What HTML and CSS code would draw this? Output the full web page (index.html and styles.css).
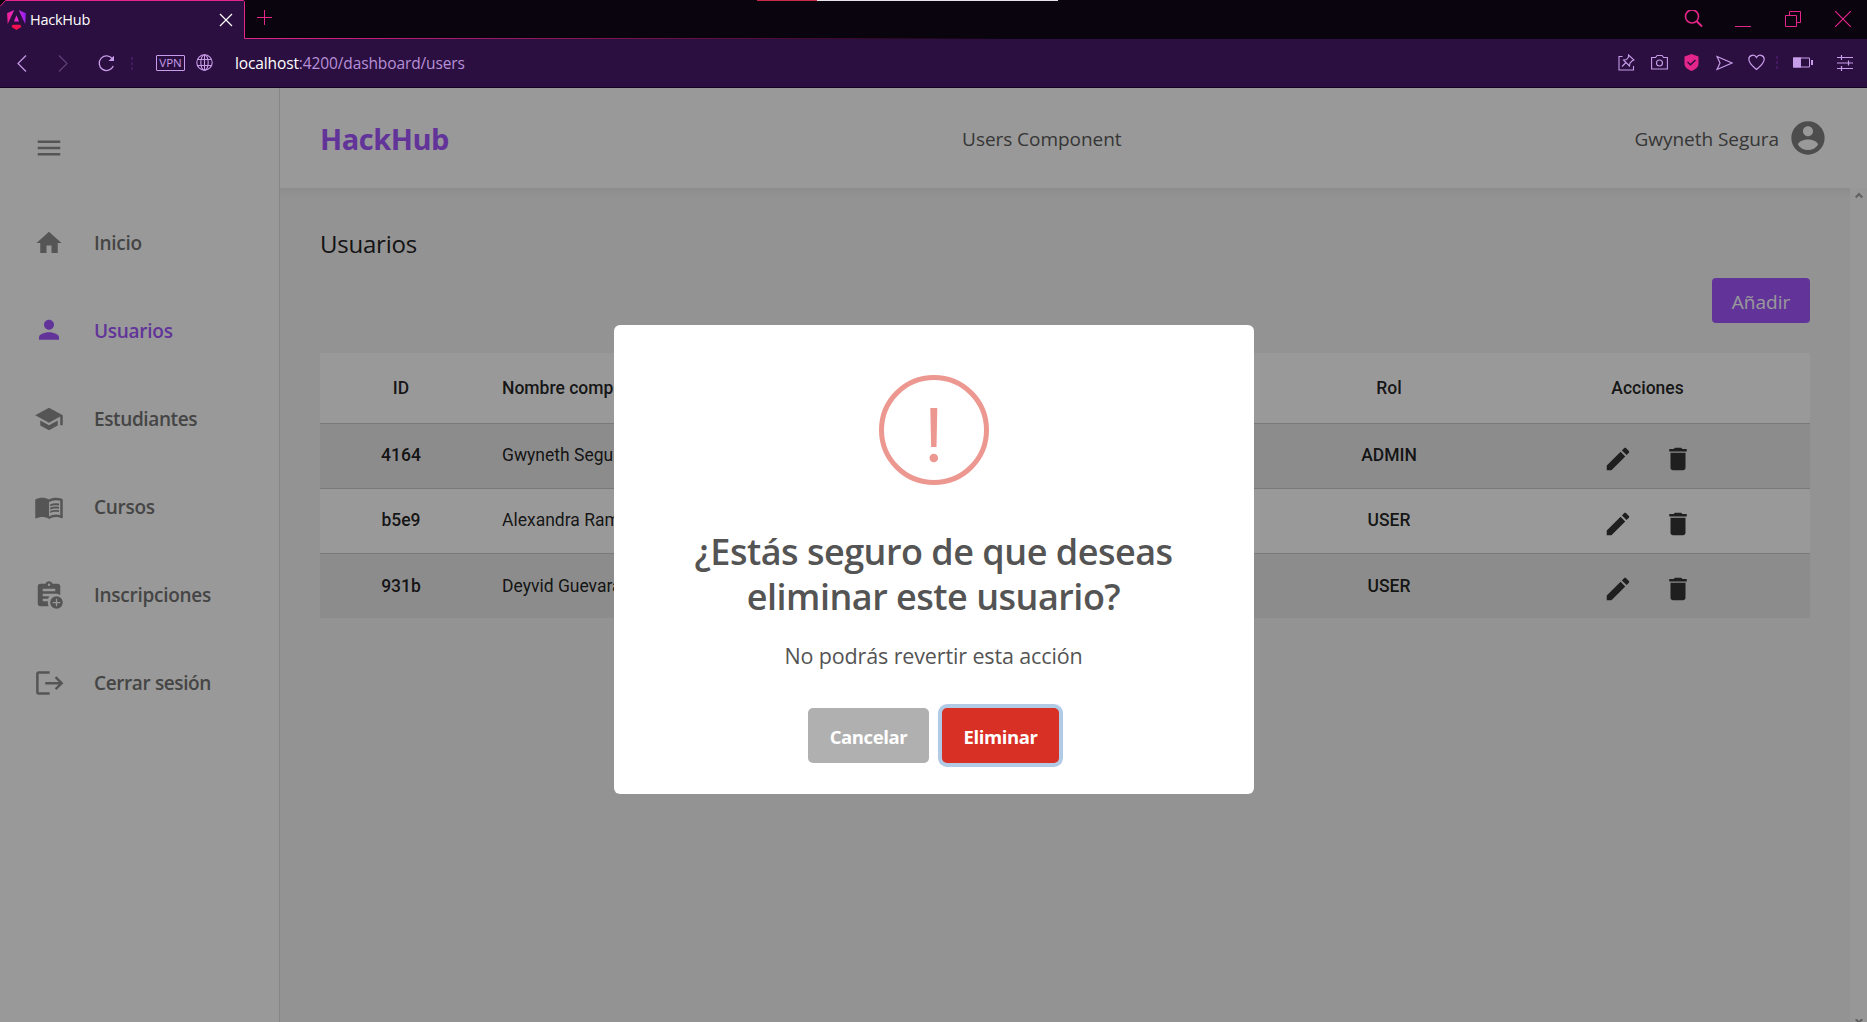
FILE: index.html
```html
<!DOCTYPE html>
<html lang="es">
<head>
<meta charset="utf-8">
<title>HackHub</title>
<link rel="stylesheet" href="styles.css">
</head>
<body>
<header class="browser">
  <div class="tabstrip">
    <div class="tab">
      <svg class="tab-edge" width="245" height="39" viewBox="0 0 245 39"><path d="M0 39V6.500L5.500.5H243.500L244.500 1.500V39z" fill="#2b0f40"/><path d="M0 6.500L5.500.5H243.500L244.500 1.500V38.500" fill="none" stroke="#e4258a"/></svg>
      <svg class="favicon" width="19" height="20" viewBox="0 0 223 236"><defs><linearGradient id="ng" x1="0" y1="0.2" x2="1" y2="0"><stop offset="0" stop-color="#f0219a"/><stop offset=".5" stop-color="#e92ad8"/><stop offset="1" stop-color="#7a1cf5"/></linearGradient></defs><path fill="url(#ng)" d="m222.077 39.192-8.019 125.923L137.387 0l84.690 39.192ZM111.039 62.675l30.357 73.803H80.681l30.358-73.803ZM7.937 165.115 0 39.192 84.690 0 7.937 165.115Z"/><path fill="#f4114f" d="m168.972 202.017-57.933 33.056-57.934-33.056 11.783-28.556h92.301l11.783 28.556Z"/></svg>
      <span class="tab-title">HackHub</span>
      <svg class="tab-close" width="14" height="14" viewBox="0 0 14 14"><path d="M1 1l12 12M13 1L1 13" stroke="#fff" stroke-width="1.200"/></svg>
    </div>
    <svg class="new-tab" width="15" height="15" viewBox="0 0 15 15"><path d="M0 7.500h15M7.500 0v15" stroke="#e4258a"/></svg>
    <div class="window-controls">
      <svg width="19" height="19" viewBox="0 0 19 19"><circle cx="8" cy="6.500" r="6.500" fill="none" stroke="#e4258a" stroke-width="1.600"/><path d="M12.500 11l5.500 5.500" stroke="#e4258a" stroke-width="2"/></svg>
      <svg width="16" height="17" viewBox="0 0 16 17"><path d="M0 15.500h16" stroke="#e4258a" stroke-width="1"/></svg>
      <svg width="16" height="16" viewBox="0 0 16 16"><path d="M.5 4.500h11v11H.5zM4.500 4V.5h11v11h-4" fill="none" stroke="#e4258a"/></svg>
      <svg width="16" height="16" viewBox="0 0 16 16"><path d="M0 0l16 16M16 0L0 16" stroke="#e4258a" stroke-width="1.200"/></svg>
    </div>
    <div class="screen-mark"></div>
  </div>
  <div class="toolbar">
    <svg class="back" width="10" height="17" viewBox="0 0 10 17"><path d="M9 .5L1 8.500l8 8" fill="none" stroke="#c79ce8" stroke-width="1.200"/></svg>
    <svg class="forward" width="10" height="17" viewBox="0 0 10 17"><path d="M1 .5l8 8-8 8" fill="none" stroke="#60407a" stroke-width="1.200"/></svg>
    <svg class="reload" width="17" height="17" viewBox="0 0 17 17"><path d="M14.500 4A7.300 7.300 0 1 0 15.300 11" fill="none" stroke="#c79ce8" stroke-width="1.300"/><path d="M16 .8V6H10.500z" fill="#c79ce8"/></svg>
    <i class="dots"></i>
    <span class="vpn">VPN</span>
    <svg class="globe" width="17" height="17" viewBox="0 0 17 17" fill="none" stroke="#c79ce8" stroke-width="1.100"><circle cx="8.500" cy="8.500" r="7.700"/><ellipse cx="8.500" cy="8.500" rx="3.700" ry="7.700"/><path d="M8.500.8v15.400M1.500 5.500h14M1.500 11.500h14"/></svg>
    <div class="url"><b>localhost</b>:4200/dashboard/users</div>
    <div class="tools">
      <svg width="17" height="17" viewBox="0 0 17 17" fill="none" stroke="#c79ce8" stroke-width="1.100"><path d="M4.500 2.500H1v13.500h14.500v-4M4 12.500l4-4M10.500 1l5.500 5-1.500.5-2.500 2.500-.5 3-6-6 3-.5L10.500 3z"/></svg>
      <svg width="17" height="17" viewBox="0 0 17 17" fill="none" stroke="#c79ce8" stroke-width="1.100"><path d="M.6 3.500h4l1.500-2h5l1.500 2h3.800v11.500H.6z"/><circle cx="8.500" cy="9" r="3"/></svg>
      <svg width="15" height="17" viewBox="0 0 15 17"><path d="M7.500 0L14.500 2.500V9.500C14.500 13.500 11 15.500 7.500 17 4 15.500.5 13.500.5 9.500V2.500z" fill="#e4258a"/><path d="M3.500 8l3 2.700L11.500 6" fill="none" stroke="#2b0f40" stroke-width="1.500"/></svg>
      <svg width="17" height="17" viewBox="0 0 17 17"><path d="M1 2.500l15 6.500-15 6.500 3-6.500z" fill="none" stroke="#c79ce8" stroke-width="1.200"/></svg>
      <svg width="17" height="17" viewBox="0 0 17 17"><path d="M8.500 15.500C5 12.500.8 9.500.8 5.300.8 1 6.500-.3 8.500 3.500c2-3.800 7.700-2.500 7.700 1.800 0 4.200-4.200 7.200-7.700 10.200z" fill="none" stroke="#c79ce8" stroke-width="1.200"/></svg>
      <i class="dots"></i>
      <svg width="20" height="11" viewBox="0 0 20 11"><path d="M.5 1h16v9H.5z" fill="none" stroke="#c79ce8"/><path d="M0 .5h8v10H0zM18 3h2v5h-2z" fill="#c79ce8"/></svg>
      <svg width="16" height="16" viewBox="0 0 16 16"><path d="M0 2.500h16M0 8h16M0 13.500h16M4.500 0v5M11.500 5.500v5M4.500 11v5" stroke="#c79ce8" stroke-width="1.200"/></svg>
    </div>
  </div>
</header>

<div class="app">
  <aside class="sidebar">
    <svg class="icon menu" viewBox="0 0 24 24"><path d="M3 18h18v-2H3v2zm0-5h18v-2H3v2zm0-7v2h18V6H3z"/></svg>
    <nav>
      <a class="nav-item"><svg class="icon" viewBox="0 0 24 24"><path d="M10 20v-6h4v6h5v-8h3L12 3 2 12h3v8z"/></svg><span>Inicio</span></a>
      <a class="nav-item active"><svg class="icon" viewBox="0 0 24 24"><path d="M12 12c2.210 0 4-1.790 4-4s-1.790-4-4-4-4 1.790-4 4 1.790 4 4 4zm0 2c-2.670 0-8 1.340-8 4v2h16v-2c0-2.660-5.330-4-8-4z" transform="translate(0 -1)"/></svg><span>Usuarios</span></a>
      <a class="nav-item"><svg class="icon" viewBox="0 0 24 24"><path d="M5 13.180v4L12 21l7-3.820v-4L12 17l-7-3.820zM12 3L1 9l11 6 9-4.910V17h2V9L12 3z"/></svg><span class="tight">Estudiantes</span></a>
      <a class="nav-item"><svg class="icon" viewBox="0 0 24 24"><path d="M21 5c-1.110-.35-2.330-.5-3.500-.5-1.950 0-4.050.4-5.500 1.500-1.450-1.100-3.550-1.500-5.500-1.500S2.450 4.900 1 6v14.650c0 .25.25.5.5.5.1 0 .15-.05.25-.05C3.100 20.450 5.050 20 6.500 20c1.950 0 4.050.4 5.500 1.500 1.350-.85 3.800-1.500 5.500-1.500 1.650 0 3.350.3 4.750 1.050.1.050.15.050.25.050.25 0 .5-.25.5-.5V6c-.6-.45-1.250-.75-2-1zm0 13.500c-1.100-.35-2.300-.5-3.500-.5-1.700 0-4.150.65-5.500 1.500V8c1.350-.85 3.800-1.500 5.500-1.500 1.200 0 2.400.15 3.500.5v11.500z"/><path d="M17.500 10.500c.88 0 1.730.09 2.500.26V9.240c-.79-.15-1.640-.24-2.500-.24-1.700 0-3.240.29-4.500.83v1.660c1.130-.64 2.700-.99 4.500-.99zM13 12.490v1.660c1.130-.64 2.700-.99 4.500-.99.880 0 1.730.09 2.500.26V11.900c-.79-.15-1.640-.24-2.500-.24-1.700 0-3.240.3-4.500.83zM17.500 14.330c-1.700 0-3.240.29-4.500.83v1.660c1.130-.64 2.700-.99 4.500-.99.880 0 1.730.09 2.500.26v-1.520c-.79-.16-1.640-.24-2.500-.24z"/></svg><span>Cursos</span></a>
      <a class="nav-item"><svg class="icon" viewBox="0 0 24 24"><path d="M17 11c1.400 0 2.800.4 4 1.100V5c0-1.100-.9-2-2-2h-4.180C14.400 1.840 13.300 1 12 1s-2.400.84-2.820 2H5c-1.100 0-2 .9-2 2v14c0 1.100.9 2 2 2h6.680A7 7 0 0 1 11.100 17H7v-2h4.300c.2-.7.500-1.400 1-2H7v-2h7.700A7 7 0 0 1 17 11zM12 2.750a1 1 0 1 1 0 2 1 1 0 0 1 0-2zM7 7h10v2H7z" fill-rule="evenodd"/><path d="M18 13a5 5 0 1 0 0 10 5 5 0 0 0 0-10zm3 5.500h-2.500V21h-1v-2.500H15v-1h2.500V15h1v2.500H21z"/></svg><span>Inscripciones</span></a>
      <a class="nav-item"><svg class="icon" viewBox="0 0 24 24"><path d="M12.500 4.500V2.500H3.700C2.600 2.500 1.700 3.400 1.700 4.500v14.800c0 1.100.9 2 2 2h8.800v-2H3.700V4.500zM9 11.100h10.700l-3.100-3.100 1.400-1.400L23.500 12.100 18 17.600l-1.400-1.400 3.100-3.100H9z"/></svg><span class="tight">Cerrar sesión</span></a>
    </nav>
  </aside>

  <div class="main">
    <div class="topbar">
      <div class="brand">HackHub</div>
      <div class="page-name">Users Component</div>
      <div class="account"><span>Gwyneth Segura</span><svg width="40" height="40" viewBox="0 0 24 24"><path d="M12 2C6.480 2 2 6.480 2 12s4.480 10 10 10 10-4.480 10-10S17.520 2 12 2zm0 3c1.660 0 3 1.340 3 3s-1.340 3-3 3-3-1.340-3-3 1.340-3 3-3zm0 14.200c-2.500 0-4.710-1.280-6-3.220.03-1.990 4-3.080 6-3.080 1.990 0 5.970 1.090 6 3.080-1.290 1.940-3.500 3.220-6 3.220z"/></svg></div>
    </div>
    <div class="scroll-area">
      <section class="content">
        <h2>Usuarios</h2>
        <div class="actions"><button class="add">Añadir</button></div>
        <table>
          <colgroup><col class="c-id"><col class="c-name"><col class="c-role"><col class="c-act"></colgroup>
          <thead><tr><th>ID</th><th class="name">Nombre completo</th><th>Rol</th><th>Acciones</th></tr></thead>
          <tbody>
            <tr><td class="strong">4164</td><td class="name">Gwyneth Segura</td><td class="strong">ADMIN</td><td><div class="row-actions"><svg viewBox="0 0 24 24"><use href="#edit"/></svg><svg viewBox="0 0 24 24"><use href="#trash"/></svg></div></td></tr>
            <tr><td class="strong">b5e9</td><td class="name">Alexandra Ramos</td><td class="strong">USER</td><td><div class="row-actions"><svg viewBox="0 0 24 24"><use href="#edit"/></svg><svg viewBox="0 0 24 24"><use href="#trash"/></svg></div></td></tr>
            <tr><td class="strong">931b</td><td class="name">Deyvid Guevara</td><td class="strong">USER</td><td><div class="row-actions"><svg viewBox="0 0 24 24"><use href="#edit"/></svg><svg viewBox="0 0 24 24"><use href="#trash"/></svg></div></td></tr>
          </tbody>
        </table>
      </section>
      <div class="scrollbar">
        <svg width="8" height="7" viewBox="0 0 8 7"><path d="M0.700 5.500L4 2l3.300 3.500" fill="none" stroke="#a0a0a0" stroke-width="2"/></svg>
        <svg width="8" height="3" viewBox="0 0 8 3"><path d="M.7 0L4 3.500 7.300 0" fill="none" stroke="#a0a0a0" stroke-width="2"/></svg>
      </div>
    </div>
  </div>

  <div class="overlay">
    <div class="modal" role="dialog">
      <svg class="warning" width="110" height="110" viewBox="0 0 110 110"><circle cx="55" cy="55" r="52.500" fill="none" stroke="#ec9790" stroke-width="5"/><path d="M51.300 33h7l-.8 39h-5.400z" fill="#ec9790"/><circle cx="54.800" cy="83" r="4.300" fill="#ec9790"/></svg>
      <h3>¿Estás seguro de que deseas<br>eliminar este usuario?</h3>
      <p>No podrás revertir esta acción</p>
      <div class="buttons"><button class="cancel">Cancelar</button><button class="confirm">Eliminar</button></div>
    </div>
  </div>
</div>

<svg width="0" height="0" class="defs"><defs>
  <path id="edit" d="M3 17.250V21h3.750L17.810 9.940l-3.750-3.750L3 17.250zM20.710 7.040c.39-.39.39-1.020 0-1.410l-2.340-2.340c-.39-.39-1.020-.39-1.410 0l-1.830 1.830 3.750 3.750 1.830-1.830z"/>
  <path id="trash" d="M6 19c0 1.100.9 2 2 2h8c1.100 0 2-.9 2-2V7H6v12zM19 4h-3.500l-1-1h-5l-1 1H5v2h14V4z"/>
</defs></svg>
</body>
</html>
```
FILE: styles.css
```css
* { box-sizing: border-box; }
body { margin: 0; width: 1867px; height: 1022px; overflow: hidden; display: flex; flex-direction: column; font-family: "Open Sans", "Noto Sans", sans-serif; background: #f5f5f5; }
svg { display: block; flex: none; }
.defs { position: absolute; }

/* Browser chrome */
.browser { flex: none; height: 88px; background: #2b0f40; border-bottom: 1px solid #150524; }
.tabstrip { position: relative; display: flex; align-items: flex-start; height: 39px; background: linear-gradient(90deg, #e4258a 245px, #0a040e 1010px) 0 38px / 100% 1px no-repeat #0a040e; }
.tab { position: relative; display: flex; align-items: center; width: 245px; height: 39px; padding-left: 7px; }
.tab-edge { position: absolute; left: 0; top: 0; }
.favicon { position: relative; }
.tab-title { position: relative; margin-left: 4px; font-size: 14.500px; line-height: 20px; letter-spacing: -.25px; color: #fff; }
.tab-close { position: relative; margin: 0 12px 0 auto; }
.new-tab { margin: 10px 0 0 12px; }
.window-controls { display: flex; gap: 34px; margin: 11px 16px 0 auto; }
.window-controls svg:first-child { margin: -1px -2px 0 0; }
.screen-mark { position: absolute; left: 757px; top: 0; width: 301px; height: 1px; background: linear-gradient(90deg, #c92a46 60px, #e8e4ea 60px); }
.toolbar { display: flex; align-items: center; height: 48px; padding: 0 14px 0 17px; }
.forward { margin-left: 31px; }
.reload { margin-left: 30px; }
.dots { width: 2px; height: 13px; background: repeating-linear-gradient(#42195f 0 3px, transparent 3px 5px); }
.reload + .dots { margin-left: 16px; }
.vpn { margin: -1px 0 0 23px; width: 29px; height: 16px; border: 1px solid #c79ce8; border-radius: 1px; color: #c79ce8; font-size: 11.500px; line-height: 14px; text-align: center; }
.globe { margin: -1px 0 0 11px; }
.url { margin-left: 22px; font-size: 15.500px; line-height: 24px; letter-spacing: -.12px; color: #b78fd8; }
.url b { font-weight: 400; color: #fff; }
.tools { display: flex; align-items: center; gap: 16px; margin: -1px 0 0 auto; }
.tools .dots { margin: 0 -1px 0 -5px; }
.tools svg:nth-child(5) { margin-left: -1px; }
.tools svg:nth-child(4) { margin-left: 1px; }
.tools svg:last-child { margin-left: 8px; }

/* Application */
.app { position: relative; flex: 1; display: flex; min-height: 0; }
.sidebar { flex: none; width: 280px; background: #fff; border-right: 1px solid #e0e0e0; padding: 45px 0 0 34px; }
.icon { width: 30px; height: 30px; fill: #8e8e8e; }
nav { margin-top: 36px; }
.nav-item { display: flex; align-items: center; height: 88px; color: #737373; font-size: 19px; font-weight: 600; line-height: 26px; letter-spacing: -.27px; }
.nav-item span { margin-left: 30px; }
.nav-item .tight { letter-spacing: -.38px; }
.nav-item.active { color: #a358ff; }
.nav-item.active .icon { fill: #a358ff; }
.main { flex: 1; display: flex; flex-direction: column; }
.topbar { height: 100px; background: #fff; display: flex; align-items: center; justify-content: space-between; padding: 0 39px 0 40px; color: #5a5a5a; font-size: 19px; letter-spacing: -.05px; }
.brand { font-size: 29px; font-weight: 700; letter-spacing: -.46px; color: #a358ff; }
.page-name, .account span { padding-top: 2px; }
.account { display: flex; align-items: center; gap: 9px; }
.account svg { fill: #808080; }
.scroll-area { flex: 1; display: flex; box-shadow: inset 0 9px 8px -6px #e8e8e8; }
.content { flex: 1; padding: 40px 40px 0; }
.scrollbar { display: flex; flex-direction: column; justify-content: space-between; width: 17px; background: #fcfcfc; padding: 4px 0 0 5px; }
h2 { margin: 0; font-size: 24px; font-weight: 500; line-height: 32px; letter-spacing: -.22px; color: #222; }
.actions { display: flex; justify-content: flex-end; margin-top: 18px; }
button { border: 0; padding: 0; font-family: inherit; display: block; }
.add { width: 98px; height: 45px; padding-top: 2px; border-radius: 4px; background: #a358ff; color: #fff; font-size: 19px; }
table { margin-top: 30px; width: 1490px; table-layout: fixed; border-collapse: collapse; font-family: Roboto, sans-serif; font-size: 17.500px; color: rgba(0,0,0,.87); text-align: center; }
.c-id { width: 162px; } .c-name { width: 747px; } .c-role { width: 320px; } .c-act { width: 261px; }
th { height: 70px; padding: 0; background: #fff; font-weight: 500; }
td { height: 65px; padding: 0 0 2px; border-top: 1px solid #cacaca; }
tr:last-child td { padding-bottom: 0; }
th:last-child, td:last-child, tr:last-child td:last-child { padding: 0 64px 0 0; }
tbody tr { background: #fff; }
tbody tr:nth-child(odd) { background: #e9e9e9; }
.name { text-align: left; padding-left: 20px; }
.strong { font-weight: 500; }
.row-actions { display: flex; justify-content: center; gap: 30px; padding-top: 7px; }
.row-actions svg { width: 30px; height: 30px; fill: #353535; }

/* Confirmation dialog */
.overlay { position: absolute; inset: 0; background: rgba(0,0,0,.4); display: flex; align-items: center; justify-content: center; }
.modal { width: 640px; height: 469px; margin-top: 8px; background: #fff; border-radius: 6px; display: flex; flex-direction: column; align-items: center; padding-top: 50px; color: #545454; }
.modal h3 { margin: 44px 0 0; font-size: 36px; font-weight: 600; line-height: 45px; letter-spacing: -.5px; text-align: center; }
.modal p { margin: 21px 0 0; font-size: 21.500px; line-height: 32px; letter-spacing: -.13px; }
.buttons { display: flex; gap: 13px; margin-top: 36px; }
.buttons button { height: 55px; padding-top: 2px; border-radius: 5px; color: #fff; font-size: 18.500px; font-weight: 700; letter-spacing: -.4px; }
.buttons .cancel { width: 121px; background: #b0b0b0; }
.buttons .confirm { width: 117px; background: #d93025; box-shadow: 0 0 0 4px #b1cae5; }
```
